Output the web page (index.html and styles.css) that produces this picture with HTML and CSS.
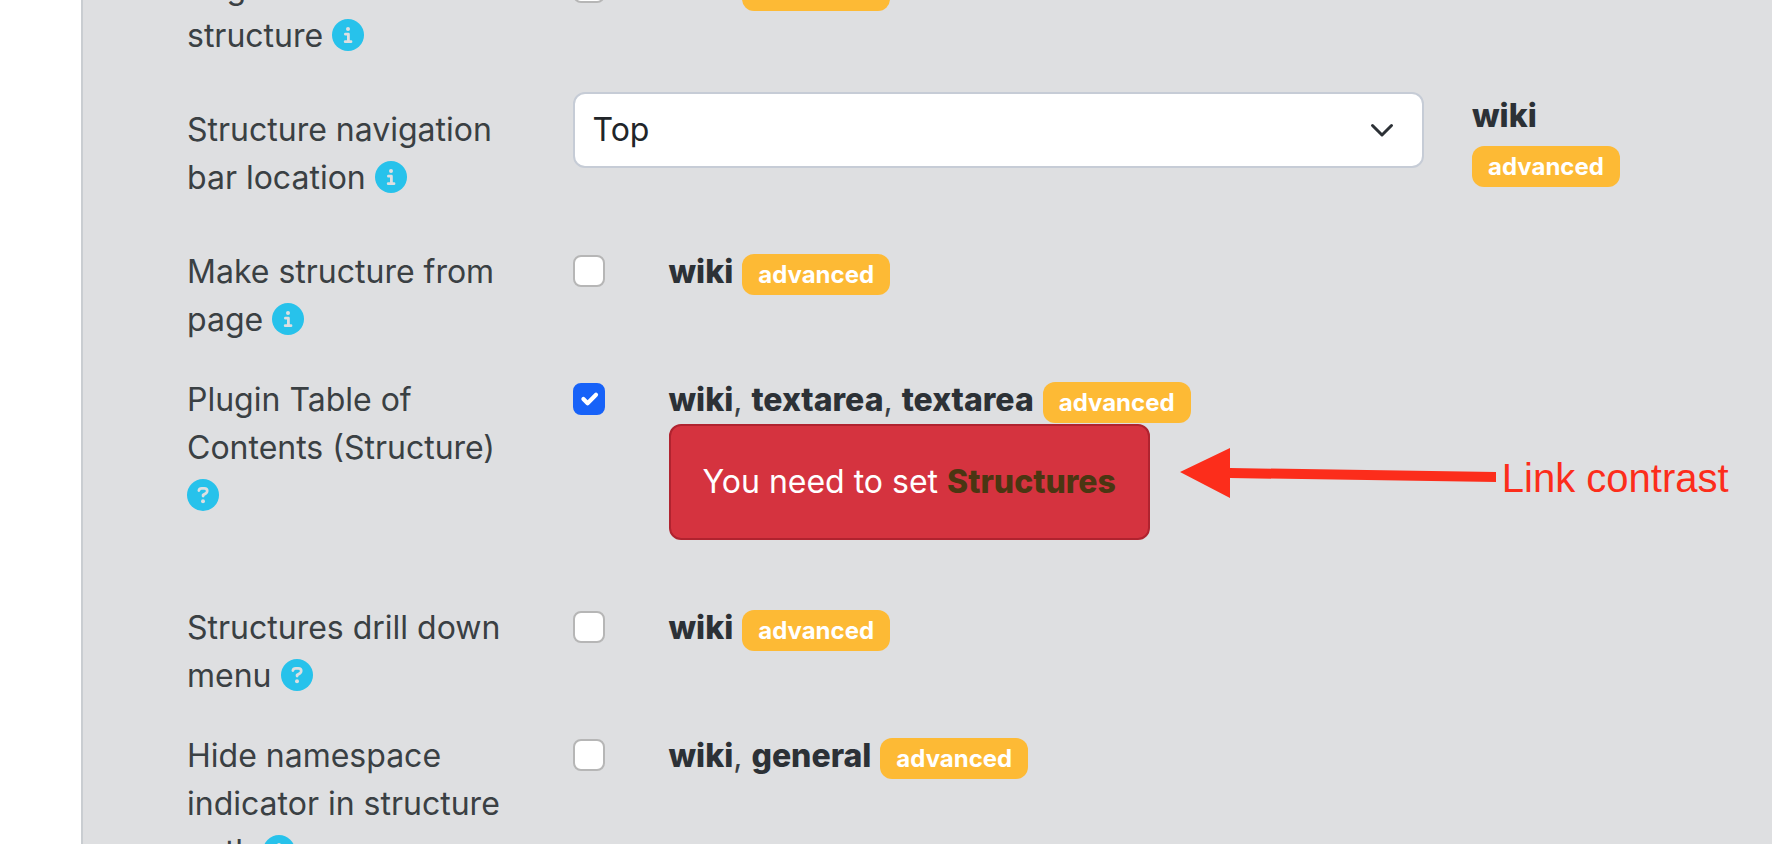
FILE: index.html
```html
<!DOCTYPE html>
<html lang="en">
<head>
  <meta charset="UTF-8">
  <meta name="viewport" content="width=device-width, initial-scale=1.0">
  <title>Wiki Structures</title>
  <link rel="stylesheet" href="styles.css">
</head>
<body>
  <!-- Shared icons -->
  <svg class="sprite" aria-hidden="true">
    <symbol id="icon-info" viewBox="0 0 32 32">
      <circle cx="16" cy="16" r="16" fill="#27c2eb"/>
      <circle cx="16" cy="10" r="2" fill="#dedfe1"/>
      <path d="M13.4 15.2h3v7.2M13.2 22.7h5.8" fill="none" stroke="#dedfe1" stroke-width="2.8" stroke-linecap="round" stroke-linejoin="round"/>
    </symbol>
    <symbol id="icon-help" viewBox="0 0 32 32">
      <circle cx="16" cy="16" r="16" fill="#27c2eb"/>
      <path d="M11.9 11.6c.3-1.5 1.3-2.2 2.8-2.2h2.6c1.7 0 2.9 1.1 2.9 2.7 0 1.1-.6 1.9-1.5 2.4L16.1 16v1" fill="none" stroke="#dedfe1" stroke-width="2.8" stroke-linecap="round" stroke-linejoin="round"/>
      <circle cx="16" cy="22.2" r="2" fill="#dedfe1"/>
    </symbol>
  </svg>

  <main class="panel">
    <form class="prefs">
      <div class="pref">
        <div class="pref-label">
          <label for="begin-structure">Begin with the new structure</label>
          <a href="#info"><svg class="icon" role="img" aria-label="Info"><use href="#icon-info"/></svg></a>
        </div>
        <div class="pref-body">
          <input type="checkbox" id="begin-structure">
          <div class="pref-tags"><b>wiki</b> <span class="badge">advanced</span></div>
        </div>
      </div>

      <div class="pref pref-select">
        <div class="pref-label">
          <label for="nav-location">Structure navigation bar location</label>
          <a href="#info"><svg class="icon" role="img" aria-label="Info"><use href="#icon-info"/></svg></a>
        </div>
        <div class="select-wrap">
          <select id="nav-location">
            <option>Top</option>
            <option>Bottom</option>
          </select>
          <svg class="chevron" viewBox="0 0 24 24" aria-hidden="true">
            <path d="M2.5 7.5l9.5 9.5 9.5-9.5" fill="none" stroke="#2c3136" stroke-width="3" stroke-linecap="round" stroke-linejoin="round"/>
          </svg>
        </div>
        <div class="pref-tags"><b>wiki</b> <span class="badge">advanced</span></div>
      </div>

      <div class="pref">
        <div class="pref-label">
          <label for="make-structure">Make structure from page</label>
          <a href="#info"><svg class="icon" role="img" aria-label="Info"><use href="#icon-info"/></svg></a>
        </div>
        <div class="pref-body">
          <input type="checkbox" id="make-structure">
          <div class="pref-tags"><b>wiki</b> <span class="badge">advanced</span></div>
        </div>
      </div>

      <div class="pref">
        <div class="pref-label">
          <label for="plugin-toc">Plugin Table of Contents (Structure)</label>
          <a href="#help"><svg class="icon" role="img" aria-label="Help"><use href="#icon-help"/></svg></a>
        </div>
        <div class="pref-body">
          <input type="checkbox" id="plugin-toc" checked>
          <div class="pref-tags">
            <b>wiki</b>, <b>textarea</b>, <b>textarea</b> <span class="badge">advanced</span>
            <div class="alert">
              You need to set <a href="#structures">Structures</a>
              <div class="note">
                <svg class="arrow" viewBox="0 0 316 50" aria-hidden="true">
                  <path d="M0 24L50 0v20l266 4v10l-266-4v20z" fill="#fc2d1b"/>
                </svg>
                <span>Link contrast</span>
              </div>
            </div>
          </div>
        </div>
      </div>

      <div class="pref">
        <div class="pref-label">
          <label for="drill-down">Structures drill down menu</label>
          <a href="#help"><svg class="icon" role="img" aria-label="Help"><use href="#icon-help"/></svg></a>
        </div>
        <div class="pref-body">
          <input type="checkbox" id="drill-down">
          <div class="pref-tags"><b>wiki</b> <span class="badge">advanced</span></div>
        </div>
      </div>

      <div class="pref">
        <div class="pref-label">
          <label for="hide-namespace">Hide namespace indicator in structure path</label>
          <a href="#info"><svg class="icon" role="img" aria-label="Info"><use href="#icon-info"/></svg></a>
        </div>
        <div class="pref-body">
          <input type="checkbox" id="hide-namespace">
          <div class="pref-tags"><b>wiki</b>, <b>general</b> <span class="badge">advanced</span></div>
        </div>
      </div>
    </form>
  </main>
</body>
</html>
```
FILE: styles.css
```css
* {
  box-sizing: border-box;
}
body {
  margin: 0;
  height: 100vh;
  overflow: hidden;
  background-color: #ffffff;
  font-family: Inter, "Liberation Sans", sans-serif;
  font-size: 32px;
  line-height: 48px;
  color: #3a4043;
}
.sprite {
  display: none;
}
.panel {
  height: 100%;
  margin-left: 81px;
  padding: 0 91px 0 104px;
  overflow: hidden;
  background-color: #dedfe1;
  border-left: 2px solid #c9cdd1;
}
/* list is scrolled part way through its first row */
.prefs {
  margin-top: -36px;
}
.pref {
  display: grid;
  grid-template-columns: repeat(12, 1fr);
  column-gap: 48px;
  margin-bottom: 32px;
}
.pref-label {
  grid-column: span 3;
}
.pref-body {
  grid-column: span 9;
  display: flex;
  align-items: flex-start;
  gap: 64px;
}
.pref-select .pref-label {
  padding: 14px 0;
}
.pref-select .pref-tags {
  grid-column: span 2;
}
.icon {
  width: 32px;
  height: 32px;
  vertical-align: -4px;
}
b {
  font-weight: 800;
  color: #2c3136;
}
.badge {
  display: inline-block;
  padding: 8px 16px;
  border-radius: 12px;
  background-color: #fdba35;
  color: #ffffff;
  font-size: 24px;
  font-weight: 700;
  line-height: 25px;
}
input[type="checkbox"] {
  appearance: none;
  flex: none;
  width: 32px;
  height: 32px;
  margin: 7px 0 0;
  border: 2px solid #b6b6b6;
  border-radius: 8px;
  background-color: #ffffff;
}
input[type="checkbox"]:checked {
  border-color: #1762f8;
  background: #1762f8 url("data:image/svg+xml,%3csvg xmlns='http://www.w3.org/2000/svg' viewBox='0 0 20 20'%3e%3cpath fill='none' stroke='%23fff' stroke-linecap='round' stroke-linejoin='round' stroke-width='3' d='m6 10 3 3 6-6'/%3e%3c/svg%3e") center / 100%;
}
.select-wrap {
  grid-column: span 7;
  position: relative;
}
select {
  appearance: none;
  display: block;
  width: 100%;
  height: 76px;
  padding: 0 72px 0 18px;
  border: 2px solid #c6ccd6;
  border-radius: 12px;
  background-color: #ffffff;
  color: #212529;
  font: inherit;
}
.chevron {
  position: absolute;
  top: 26px;
  right: 30px;
  width: 24px;
  height: 24px;
}
.alert {
  position: relative;
  width: fit-content;
  margin-bottom: 32px;
  padding: 32px;
  border: 2px solid #b0232f;
  border-radius: 12px;
  background-color: #d5333f;
  color: #ffffff;
}
.alert a {
  color: #4a3612;
  font-weight: 800;
  text-decoration: none;
}
/* callout pointing at the alert */
.note {
  position: absolute;
  top: 22px;
  left: 100%;
  display: flex;
  align-items: flex-start;
  gap: 6px;
  margin-left: 32px;
  color: #fc2d1b;
  font-family: "Liberation Sans", sans-serif;
  font-size: 40px;
  line-height: 60px;
  white-space: nowrap;
}
.arrow {
  width: 316px;
  height: 50px;
}
```
